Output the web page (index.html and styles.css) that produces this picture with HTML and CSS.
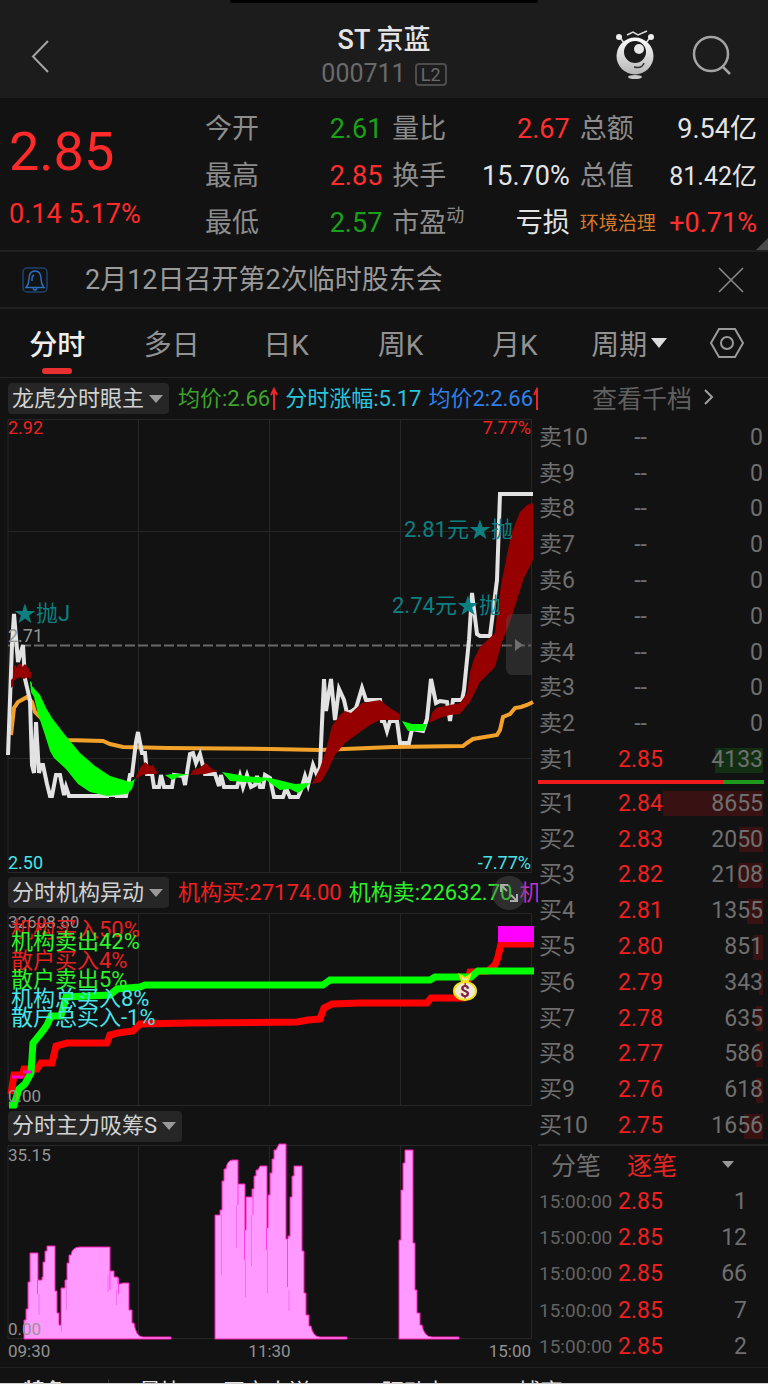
FILE: index.html
```html
<!DOCTYPE html>
<html lang="zh-CN">
<head>
    <meta charset="UTF-8">
    <meta name="viewport" content="width=device-width, initial-scale=1.0">
    <title>ST京蓝 000711</title>
    <link rel="stylesheet" href="styles.css">
</head>

<body>

    <!-- top bar -->
    <header class="topbar">
        <div class="island"></div>
        <button type="button" class="icon-btn" aria-label="返回">
            <svg width="32" height="36" viewBox="0 0 32 36"><path d="M20 3L5 18.500L20 34" fill="none" stroke="#a4a4a4" stroke-width="2"/></svg>
        </button>
        <div class="stock">
            <h1>ST 京蓝</h1>
            <div class="code">000711 <span class="level">L2</span></div>
        </div>
        <div class="actions">
            <button type="button" class="icon-btn" aria-label="智能助手">
                <svg width="44" height="52" viewBox="0 0 44 52">
                    <defs>
                        <linearGradient id="bot" x1="0" y1="0" x2="0" y2="1">
                            <stop offset="0" stop-color="#fff"/><stop offset="1" stop-color="#b5b5b5"/>
                        </linearGradient>
                    </defs>
                    <path d="M6 6L11 13M38 6L33 13M14 5L20 2L25 5L34 1" fill="none" stroke="#ddd" stroke-width="1.500"/>
                    <circle cx="6" cy="7" r="3" fill="#eee"/><circle cx="38" cy="7" r="3" fill="#eee"/>
                    <circle cx="22" cy="26" r="18.500" fill="url(#bot)"/>
                    <circle cx="22" cy="22" r="11" fill="#1b1b1b"/>
                    <circle cx="26" cy="19" r="5" fill="#e8e8e8"/>
                    <path d="M21 37Q29 39 31 33" fill="none" stroke="#333" stroke-width="1.500"/>
                    <ellipse cx="22" cy="47" rx="7" ry="2" fill="#c8c8c8"/>
                </svg>
            </button>
            <button type="button" class="icon-btn" aria-label="搜索">
                <svg width="50" height="44" viewBox="0 0 50 44" fill="none" stroke="#a4a4a4" stroke-width="2.500"><circle cx="21" cy="20" r="17"/><path d="M32 32L40 40"/></svg>
            </button>
        </div>
    </header>

    <!-- quote -->
    <section class="quote">
        <div class="price">
            <strong>2.85</strong>
            <span>0.14 5.17%</span>
        </div>
        <dl class="stats">
            <div><dt>今开</dt><dd class="down">2.61</dd></div>
            <div><dt>量比</dt><dd class="up">2.67</dd></div>
            <div><dt>总额</dt><dd>9.54亿</dd></div>
            <div><dt>最高</dt><dd class="up">2.85</dd></div>
            <div><dt>换手</dt><dd>15.70%</dd></div>
            <div><dt>总值</dt><dd class="tight">81.42亿</dd></div>
            <div><dt>最低</dt><dd class="down">2.57</dd></div>
            <div><dt>市盈<sup>动</sup></dt><dd>亏损</dd></div>
            <div><dt class="sector">环境治理</dt><dd class="up">+0.71%</dd></div>
        </dl>
        <span class="corner"></span>
    </section>

    <!-- notice -->
    <section class="notice">
        <svg width="26" height="26" viewBox="0 0 26 26" fill="none" stroke="#2b6fc0" stroke-width="1.500">
            <rect x="1" y="1" width="24" height="24" rx="4" stroke="#1f416b"/>
            <path d="M4 20.500C6 18 7 17 7 12C7 7 9 4 13 4S19 7 19 12C19 17 20 18 22 20.500ZM11 21.500Q13 24.500 15 21.500M10 14V11Q10 9 12 8"/>
        </svg>
        <p>2月12日召开第2次临时股东会</p>
        <button type="button" class="icon-btn" aria-label="关闭">
            <svg width="26" height="26" viewBox="0 0 26 26" stroke="#8c8c8c" stroke-width="1.500"><path d="M1 1L25 25M25 1L1 25"/></svg>
        </button>
    </section>

    <!-- tabs -->
    <nav class="tabs">
        <button type="button" class="tab active">分时</button>
        <button type="button" class="tab">多日</button>
        <button type="button" class="tab">日K</button>
        <button type="button" class="tab">周K</button>
        <button type="button" class="tab">月K</button>
        <button type="button" class="tab">周期<i class="caret light"></i></button>
        <button type="button" class="tab settings" aria-label="设置">
            <svg width="36" height="34" viewBox="0 0 36 34" fill="none" stroke="#9a9a9a" stroke-width="2"><path d="M10 3H26L34 17L26 31H10L2 17Z"/><circle cx="18" cy="17" r="6"/></svg>
        </button>
    </nav>

    <main class="board">
        <div class="charts">

            <!-- price chart -->
            <div class="indicator first">
                <button type="button" class="pill">龙虎分时眼主<i class="caret"></i></button>
                <div class="values">
                    <span class="green">均价:2.66<svg width="8" height="24" viewBox="0 0 8 24" fill="none" stroke="#e82828" stroke-width="2"><path d="M4 23V3M1 8L4 2L7 8"/></svg></span>
                    <span class="cyan">分时涨幅:5.17</span>
                    <span class="blue">均价2:2.66<svg width="8" height="24" viewBox="0 0 8 24" fill="none" stroke="#e82828" stroke-width="2"><path d="M4 23V3M1 8L4 2L7 8"/></svg></span>
                </div>
            </div>
            <div class="chart">
                <svg viewBox="0 419 538 454">
                    <g class="grid">
                        <path d="M8 419.500H531.500V872.500H8Z"/>
                        <path d="M138.500 419V873M269.500 419V873M400.500 419V873M8 531.500H531M8 758.500H531"/>
                    </g>
                    <path class="middle" d="M8 645.500H531"/>
                    <path class="average" d="M11 735L14 708L18 702L27 697L32 702L35 712L45 722L67 740L103 741L110 744L123 747L167 748L270 749L320 750L393 747L463 746L467 743L473 739L497 735L500 730L503 717L510 714L515 708L521 707L527 705L533 702"/>
                    <path class="line" d="M8 755L12 645L14 614L18 662L23 645L25 679L30 700L32 765L34 773L36 722L39 773L41 765L43 765L47 784L50 796L52 796L56 775L60 775L64 795L66 787L69 796H107V795H117V796H126L130 775L132 775L136 742L138 732L142 753H145L147 774H152L154 787H159L161 775L164 787H172L174 775L183 776L185 785L190 754L193 753L196 763L200 754L205 774H215L219 786L221 775L224 787H237L240 776L243 787L247 775L251 787L255 785L257 776L260 787H263L265 775L270 778L274 797H283L286 788L290 797H298L301 790L305 776L308 785L313 765L317 775L320 767L324 679L326 711L331 679L335 720L339 689L344 700L347 713L352 711L356 708L362 688L366 700H380L382 721L384 721L387 731L390 721H397L400 743H409L412 729L423 731L427 719L431 679L436 703L440 701L447 702L450 721L453 700H462L464 690L469 640L472 593L477 634L480 636H490L497 580L500 494H533"/>
                    <g class="band-up">
                        <path d="M11 688V680L13 678V667L16 665V668L19 664H22V667L25 664L29 669V672H31V679L28 677L24 679L20 677L13 681V686Z"/>
                        <path d="M135 779L140 768L145 762L150 766L153 765L158 774H148L143 775Z"/>
                        <path d="M190 775L193 770L199 768L206 763L212 769L218 771L205 774Z"/>
                        <path d="M312 784L320 768L326 750L332 726L340 715L345 711L351 713L362 703L380 700L390 708L400 714V720H380L370 725L360 732L345 743L335 755L328 770L321 782Z"/>
                        <path d="M429 723L432 713L436 708L450 705L460 703L467 693L470 672L474 659L480 647L495 633L498 605L502 580L508 550L512 532L520 512L527 505L533 503V560L524 578L517 600L509 625L502 642L495 667L480 682L470 702L460 714L450 715L440 718Z"/>
                    </g>
                    <g class="band-down">
                        <path d="M30 681L32 683V686L40 695L46 708L52 718L65 735L80 753L95 766L110 776L130 782L135 779L132 789L127 794L107 796L90 792L78 784L66 769L54 758L50 751L45 735L38 714L34 697L31 692Z"/>
                        <path d="M165 775L172 774H190L180 776L172 780Z"/>
                        <path d="M222 772L245 776L270 778L295 784L310 783L304 789L298 793L290 789L280 790L266 780L259 783L230 781Z"/>
                        <path d="M402 721L412 724L427 724L424 731L408 731Z"/>
                    </g>
                    <g class="signal">
                        <text x="14" y="621">★抛J</text>
                        <text x="404" y="537">2.81元★抛</text>
                        <text x="392" y="613">2.74元★抛</text>
                    </g>
                    <g class="scale large">
                        <text x="8" y="434" class="red">2.92</text>
                        <text x="531" y="434" class="red end">7.77%</text>
                        <text x="8" y="642">2.71</text>
                        <text x="8" y="869" class="aqua">2.50</text>
                        <text x="531" y="869" class="aqua end">-7.77%</text>
                    </g>
                </svg>
                <button type="button" class="side-btn" aria-label="收起盘口">
                    <svg width="8" height="12" viewBox="0 0 8 12"><path d="M0 0L8 6L0 12Z" fill="#6f6f6f"/></svg>
                </button>
            </div>

            <!-- institution chart -->
            <div class="indicator">
                <button type="button" class="pill">分时机构异动<i class="caret"></i></button>
                <div class="values">
                    <span class="red">机构买:27174.00</span>
                    <span class="lime">机构卖:22632.70</span>
                    <span class="purple">机</span>
                </div>
                <button type="button" class="expand" aria-label="全屏">
                    <svg width="20" height="20" viewBox="0 0 20 20" fill="none" stroke="#aaa" stroke-width="2"><path d="M2 9V2H9M2 2L8 8M11 18H18V11M18 18L12 12"/></svg>
                </button>
            </div>
            <div class="chart">
                <svg viewBox="0 912 538 195">
                    <g class="grid">
                        <path d="M8 913.500H531.500V1105.500H8Z"/>
                        <path d="M138.500 913V1106M269.500 913V1106M400.500 913V1106"/>
                    </g>
                    <path class="flow buy" d="M11 1094L14 1075H22L24 1069H37L41 1063H52L56 1046L67 1043H107L110 1035L118 1033L133 1031L140 1024L190 1023L297 1022L308 1020L320 1019L324 1008L332 1004L360 1003H427L431 998H463L470 972L488 971L495 965L498 957L501 944H534"/>
                    <path class="flow sell" d="M9 1105H14L19 1089L25 1084L31 1073L33 1043L42 1032L47 1025L51 1016H61L66 997L110 995L117 989L140 987L145 985H323L330 980H430L435 977H471L478 971H534"/>
                    <rect x="498" y="926" width="36" height="16" fill="#f0f"/>
                    <path d="M12 1077H23M23 1072H32" stroke="#f0c" stroke-width="3"/>
                    <g class="coin">
                        <path d="M460 975L465 978L470 975L468 981H462Z"/>
                        <ellipse cx="465" cy="991" rx="11" ry="9"/>
                        <text x="465" y="997">$</text>
                    </g>
                    <g class="scale"><text x="8" y="928">32608.80</text></g>
                    <g class="signal">
                        <text x="11" y="937" class="red">机构买入50%</text>
                        <text x="11" y="949" class="lime">机构卖出42%</text>
                        <text x="11" y="968" class="red">散户买入4%</text>
                        <text x="11" y="987" class="lime">散户卖出5%</text>
                        <text x="11" y="1006" class="aqua">机构总买入8%</text>
                        <text x="11" y="1025" class="aqua">散户总买入-1%</text>
                    </g>
                    <g class="scale"><text x="8" y="1102">0.00</text></g>
                </svg>
            </div>

            <!-- absorb chart -->
            <div class="indicator last">
                <button type="button" class="pill">分时主力吸筹S<i class="caret"></i></button>
            </div>
            <div class="chart">
                <svg viewBox="0 1145 538 194">
                    <g class="grid">
                        <path d="M8 1145.500H531.500V1338.500H8Z"/>
                        <path d="M138.500 1145V1339M269.500 1145V1339M400.500 1145V1339"/>
                    </g>
                    <g class="absorb">
                        <path d="M24 1339V1320H26V1309H28V1282H30V1253H38V1280H42V1277H43V1262H45V1251H47V1246H55V1291H57V1313H59V1325H61V1288H65V1280H67V1263H69V1255H71Q72 1247 80 1247H110V1271H114V1277H118V1284H120L123 1283H129V1310H132V1323H134Q136 1337 143 1337H171V1339Z"/>
                        <path d="M215 1339V1215H220V1210H222V1181H224V1169H226Q227 1160 233 1160H238V1184H245V1230H246V1197H252V1189H254V1176H256V1170H258L260 1166H267V1228H268V1195H270V1173H272V1159H274V1150H276L279 1144H286V1239H288V1236H290V1197H292V1176H294V1166H302V1251H304V1293H306V1315H309V1326H311Q313 1337 320 1337H347V1339Z"/>
                        <path d="M399 1339V1240H401V1190H403V1163H405V1150H413V1243H415V1290H417V1313H420V1325H422Q424 1337 432 1337H459V1339Z"/>
                    </g>
                    <path d="M37.500 1280V1294M110 1271V1290M118.500 1278V1294M238 1184V1205M244.500 1230V1260M253 1190V1215M266.500 1228V1250M287.500 1239V1287" stroke="#ff3df0"/>
                    <path d="M39 1294V1315M61.500 1325V1332M66.500 1280V1310M108 1275V1292M116.500 1290V1305M221.500 1215V1275M236.500 1205V1248M245.500 1260V1297M251.500 1215V1266M267.500 1250V1293M289 1290V1311" stroke="#f070ee"/>
                    <g class="scale">
                        <text x="8" y="1161">35.15</text>
                        <text x="8" y="1335">0.00</text>
                    </g>
                </svg>
            </div>
            <div class="axis"><span>09:30</span><span>11:30</span><span>15:00</span></div>
        </div>

        <!-- order book -->
        <aside class="book">
            <a class="more" href="#">查看千档 <svg width="10" height="18" viewBox="0 0 10 18" fill="none" stroke="#a0a0a0" stroke-width="2"><path d="M1 2L8 9L1 16"/></svg></a>
            <table class="orders">
                <tr><th scope="row">卖10</th><td class="none">--</td><td>0</td></tr>
                <tr><th scope="row">卖9</th><td class="none">--</td><td>0</td></tr>
                <tr><th scope="row">卖8</th><td class="none">--</td><td>0</td></tr>
                <tr><th scope="row">卖7</th><td class="none">--</td><td>0</td></tr>
                <tr><th scope="row">卖6</th><td class="none">--</td><td>0</td></tr>
                <tr><th scope="row">卖5</th><td class="none">--</td><td>0</td></tr>
                <tr><th scope="row">卖4</th><td class="none">--</td><td>0</td></tr>
                <tr><th scope="row">卖3</th><td class="none">--</td><td>0</td></tr>
                <tr><th scope="row">卖2</th><td class="none">--</td><td>0</td></tr>
                <tr><th scope="row">卖1</th><td>2.85</td><td class="ask" style="--w:48%">4133</td></tr>
            </table>
            <div class="ratio"><span style="width:82%"></span></div>
            <table class="orders">
                <tr><th scope="row">买1</th><td>2.84</td><td class="bid" style="--w:100%">8655</td></tr>
                <tr><th scope="row">买2</th><td>2.83</td><td class="bid" style="--w:24%">2050</td></tr>
                <tr><th scope="row">买3</th><td>2.82</td><td class="bid" style="--w:25%">2108</td></tr>
                <tr><th scope="row">买4</th><td>2.81</td><td class="bid" style="--w:16%">1355</td></tr>
                <tr><th scope="row">买5</th><td>2.80</td><td class="bid" style="--w:10%">851</td></tr>
                <tr><th scope="row">买6</th><td>2.79</td><td class="bid" style="--w:4%">343</td></tr>
                <tr><th scope="row">买7</th><td>2.78</td><td class="bid" style="--w:7%">635</td></tr>
                <tr><th scope="row">买8</th><td>2.77</td><td class="bid" style="--w:7%">586</td></tr>
                <tr><th scope="row">买9</th><td>2.76</td><td class="bid" style="--w:7%">618</td></tr>
                <tr><th scope="row">买10</th><td>2.75</td><td class="bid" style="--w:19%">1656</td></tr>
            </table>
            <div class="trade-tabs">
                <button type="button">分笔</button>
                <button type="button" class="on">逐笔</button>
                <i class="caret small"></i>
            </div>
            <table class="orders trades">
                <tr><th scope="row">15:00:00</th><td>2.85</td><td>1</td></tr>
                <tr><th scope="row">15:00:00</th><td>2.85</td><td>12</td></tr>
                <tr><th scope="row">15:00:00</th><td>2.85</td><td>66</td></tr>
                <tr><th scope="row">15:00:00</th><td>2.85</td><td>7</td></tr>
                <tr><th scope="row">15:00:00</th><td>2.85</td><td>2</td></tr>
            </table>
        </aside>
    </main>

    <!-- bottom strip -->
    <footer class="strip">
        <span class="lead">特色</span>
        <span>最比</span>
        <span>开市大送</span>
        <span><b>50</b> 驱动力</span>
        <span><b>50</b> 博弈</span>
        <span><b>50</b> 2004</span>
        <span><b>50</b></span>
    </footer>

</body>
</html>
```
FILE: styles.css
```css
*{
    margin: 0;
    padding: 0;
    box-sizing: border-box;
}
body{
    font-family: Roboto, "Noto Sans CJK SC", sans-serif;
    background: #121212;
    color: #e4e4e4;
    overflow-x: hidden;
}
button{
    font: inherit;
    color: inherit;
    background: none;
    border: none;
    white-space: nowrap;
}
svg{
    display: block;
}

/* top bar */
.topbar{
    position: relative;
    display: grid;
    grid-template-columns: 1fr auto 1fr;
    align-items: center;
    height: 98px;
    padding: 14px 28px 0;
    background: #1c1c1c;
}
.island{
    position: absolute;
    top: 0;
    left: 30%;
    right: 30%;
    height: 3px;
    background: #000;
    border-radius: 0 0 12px 12px;
}
.icon-btn{
    justify-self: start;
}
.stock{
    text-align: center;
}
.stock h1{
    font-size: 27px;
    line-height: 36px;
    font-weight: 500;
}
.code{
    display: flex;
    align-items: center;
    justify-content: center;
    gap: 9px;
    font-size: 25px;
    line-height: 32px;
    color: #6a6a6a;
}
.level{
    width: 32px;
    height: 23px;
    border: 2px solid #4c4c4c;
    border-radius: 4px;
    font-size: 18px;
    line-height: 20px;
}
.actions{
    display: flex;
    justify-content: flex-end;
    align-items: center;
    gap: 33px;
}

/* quote */
.quote{
    position: relative;
    display: grid;
    grid-template-columns: 196px 1fr;
    height: 154px;
    padding: 8px 11px 4px 9px;
    border-bottom: 2px solid #202020;
}
.price{
    color: #ff2a2a;
}
.price strong{
    display: block;
    padding-top: 14px;
    font-size: 54px;
    line-height: 64px;
    font-weight: 400;
}
.price span{
    display: block;
    padding-top: 14px;
    font-size: 27px;
    line-height: 32px;
}
.stats{
    display: grid;
    grid-template-columns: repeat(3, 1fr);
    column-gap: 10px;
    font-size: 27px;
}
.stats div{
    display: flex;
    align-items: center;
    justify-content: space-between;
    line-height: 47px;
    white-space: nowrap;
}
dt{
    color: #8c8c8c;
}
dt sup{
    font-size: 18px;
    line-height: 18px;
}
.tight{
    font-size: 25px;
}
.sector{
    font-size: 19px;
    color: #d8792a;
}
.up{
    color: #ff2f2f;
}
.down{
    color: #1ba01b;
}
.corner{
    position: absolute;
    right: 0;
    bottom: 0;
    border-left: 12px solid transparent;
    border-bottom: 12px solid #4a4a4a;
}

/* notice */
.notice{
    display: flex;
    align-items: center;
    height: 57px;
    padding: 0 24px 0 22px;
    border-bottom: 2px solid #202020;
}
.notice p{
    flex: 1;
    padding-left: 37px;
    font-size: 27px;
    line-height: 40px;
    color: #9a9a9a;
}

/* tabs */
.tabs{
    display: flex;
    height: 69px;
    border-bottom: 1px solid #242424;
}
.tab{
    position: relative;
    display: flex;
    align-items: center;
    justify-content: center;
    width: 14.9%;
    font-size: 28px;
    color: #929292;
}
.tab.active{
    color: #eee;
    font-weight: 500;
}
.tab.active::after{
    content: "";
    position: absolute;
    bottom: 3px;
    width: 30px;
    height: 6px;
    border-radius: 3px;
    background: #e93030;
}
.tab.settings{
    flex: 1;
}
.caret{
    border: 7px solid transparent;
    border-top: 8px solid #999;
    border-bottom: 0;
    margin-left: 4px;
}
.caret.light{
    border-width: 8px;
    border-top: 10px solid #ddd;
    border-bottom: 0;
}
.caret.small{
    border-width: 6px;
    border-top: 7px solid #999;
    border-bottom: 0;
}

/* charts */
.board{
    display: grid;
    grid-template-columns: 1fr 230px;
}
.charts{
    min-width: 0;
}
.indicator{
    position: relative;
    display: flex;
    align-items: center;
    gap: 9px;
    height: 39px;
    padding-left: 8px;
    font-size: 22px;
}
.indicator.first{
    height: 41px;
}
.indicator.last{
    height: 38px;
}
.pill{
    display: flex;
    align-items: center;
    flex: none;
    height: 31px;
    padding: 0 6px 0 4px;
    border-radius: 4px;
    background: #262626;
    color: #d2d2d2;
    line-height: 28px;
}
.pill .caret{
    margin-left: 5px;
}
.values{
    display: flex;
    gap: 7px;
    flex: 1;
    min-width: 0;
    overflow: hidden;
    white-space: nowrap;
    line-height: 32px;
}
.values span{
    display: flex;
    align-items: center;
    flex: none;
}
.green{ color: #3da32a; }
.cyan{ color: #2cc3dc; }
.blue{ color: #2f80e8; }
.red{ color: #ee2020; fill: #f12222; }
.lime{ color: #2cf02c; fill: #2cf32c; }
.purple{ color: #c32fd0; }
.aqua{ fill: #48e4e8; }
.expand{
    position: absolute;
    right: 12px;
    display: flex;
    align-items: center;
    justify-content: center;
    width: 34px;
    height: 34px;
    border-radius: 50%;
    background: rgba(90, 90, 90, 0.4);
}
.chart{
    position: relative;
}
.chart > svg{
    width: 100%;
    height: auto;
    overflow: visible;
}
.grid path{
    fill: none;
    stroke: #272727;
}
.middle{
    stroke: #696969;
    stroke-width: 2;
    stroke-dasharray: 10 3;
}
.average{
    fill: none;
    stroke: #f2a12a;
    stroke-width: 4;
}
.line{
    fill: none;
    stroke: #e2e2e2;
    stroke-width: 4;
}
.band-up{
    fill: #960000;
}
.band-down{
    fill: #00ff00;
}
.signal{
    font-size: 22px;
    fill: #0c8080;
}
.signal .red{ fill: #e52222; }
.scale{
    font-size: 17px;
    fill: #959595;
}
.scale.large{
    font-size: 18px;
}
.end{
    text-anchor: end;
}
.flow{
    fill: none;
    stroke-width: 7;
}
.buy{ stroke: #ff0000; }
.sell{ stroke: #00ff00; }
.coin{
    fill: #f1e9d8;
    stroke: #f0e020;
    stroke-width: 2;
}
.coin text{
    fill: #7a2038;
    stroke: none;
    font-size: 17px;
    font-weight: 700;
    text-anchor: middle;
}
.absorb{
    fill: #ff99ff;
    stroke: #ff1fb4;
}
.side-btn{
    position: absolute;
    top: 43%;
    right: 6px;
    display: flex;
    align-items: center;
    justify-content: center;
    width: 26px;
    height: 61px;
    border-radius: 6px 0 0 6px;
    background: rgba(80, 80, 80, 0.4);
}
.axis{
    display: flex;
    justify-content: space-between;
    height: 28px;
    padding: 0 7px 0 8px;
    font-size: 17px;
    line-height: 24px;
    color: #929292;
}

/* order book */
.book{
    color: #6f6f6f;
    font-size: 23px;
}
.more{
    display: flex;
    align-items: center;
    gap: 12px;
    height: 42px;
    padding: 0 0 4px 54px;
    font-size: 25px;
    color: #606060;
    text-decoration: none;
}
.orders{
    width: 225px;
    height: 358px;
    table-layout: fixed;
    border-collapse: collapse;
    line-height: 26px;
}
.orders th{
    width: 80px;
    padding-left: 1px;
    font-weight: 400;
    text-align: left;
}
.orders td{
    width: 45px;
    text-align: center;
    color: #ee2020;
}
.orders td.none{
    color: #6f6f6f;
}
.orders td:last-child{
    width: 100px;
    text-align: right;
    color: #6f6f6f;
}
.orders .ask{
    background: linear-gradient(#132f13, #132f13) right center / var(--w) 25px no-repeat;
}
.orders .bid{
    background: linear-gradient(#381212, #381212) right center / var(--w) 25px no-repeat;
}
.ratio{
    width: 226px;
    height: 4px;
    margin: 2px 0;
    background: #1d9a1d;
}
.ratio span{
    display: block;
    height: 4px;
    background: #f01b1b;
}
.trade-tabs{
    display: flex;
    align-items: center;
    gap: 26px;
    height: 40px;
    padding: 0 0 2px 13px;
    border-top: 2px solid #242424;
    font-size: 25px;
}
.trade-tabs .on{
    color: #e52424;
}
.trade-tabs .caret{
    margin-left: 19px;
}
.orders.trades{
    height: 181px;
}
.trades th{
    font-size: 19px;
    color: #626262;
}
.orders.trades td:last-child{
    padding-right: 16px;
}

/* bottom strip */
.strip{
    display: flex;
    gap: 40px;
    height: 17px;
    padding: 11px 0 0 23px;
    border-top: 1px solid #1f1f1f;
    border-bottom: 1px solid #cfcfcf;
    overflow: hidden;
    white-space: nowrap;
    font-size: 22px;
    line-height: 26px;
}
.strip .lead{
    margin-right: -10px;
    padding-right: 41px;
    border-right: 1px solid #333;
    font-weight: 700;
}
.strip b{
    color: #e2a050;
}
```
